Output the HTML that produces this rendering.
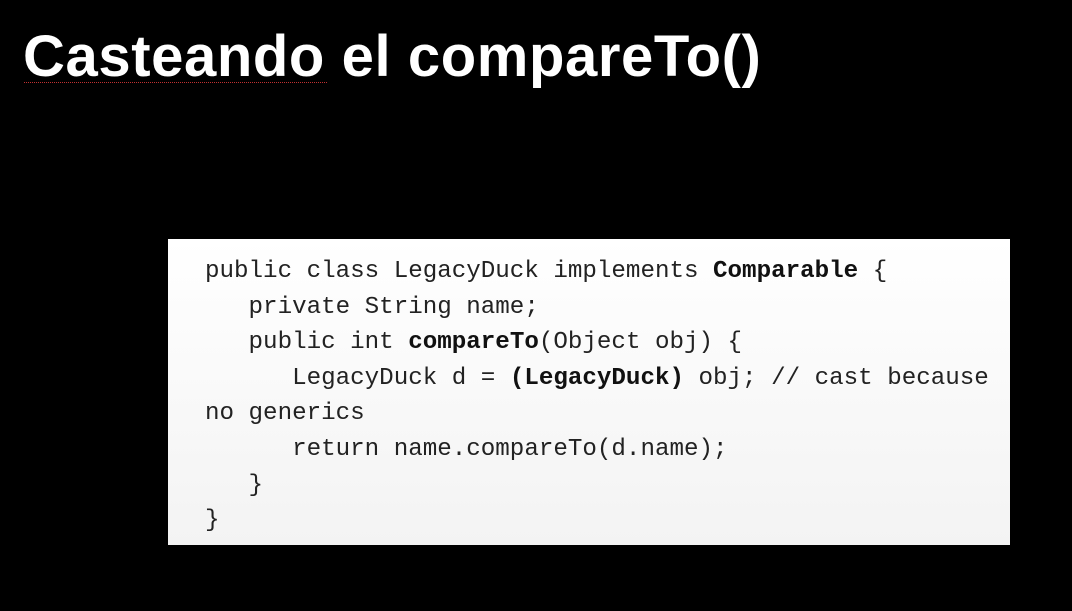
<!DOCTYPE html>
<html><head><meta charset="utf-8"><style>
html,body{margin:0;padding:0;background:#000;width:1072px;height:611px;overflow:hidden;position:relative}
.t{position:absolute;left:23px;top:24px;font-family:"Liberation Sans",sans-serif;font-weight:bold;font-size:58px;color:#fff;letter-spacing:0.6px;line-height:66px;white-space:nowrap}
.u{position:absolute;left:24px;top:82px;width:303px;border-top:1px dotted #c03030}
.box{position:absolute;left:168px;top:239px;width:842px;height:306px;background:linear-gradient(#fff,#f3f3f3)}
pre{position:absolute;left:205px;top:254px;margin:0;font-family:"Liberation Mono",monospace;font-size:24.2px;line-height:35.6px;color:#222}
b{color:#111}
</style></head><body>
<div class="t">Casteando el compareTo()</div>
<div class="u"></div>
<div class="box"></div>
<pre>public class LegacyDuck implements <b>Comparable</b> {
   private String name;
   public int <b>compareTo</b>(Object obj) {
      LegacyDuck d = <b>(LegacyDuck)</b> obj; // cast because
no generics
      return name.compareTo(d.name);
   }
}</pre>
</body></html>
